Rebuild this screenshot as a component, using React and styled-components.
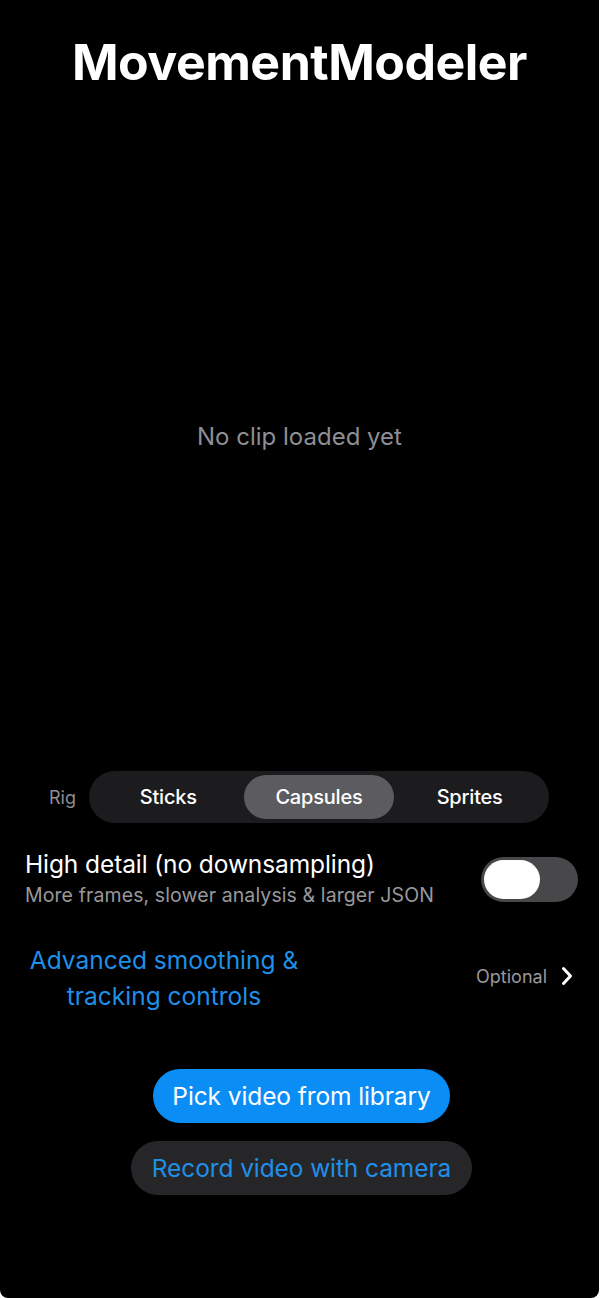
import React, { useState } from 'react'
import styled, { createGlobalStyle } from 'styled-components'

const GlobalStyle = createGlobalStyle`
  html, body {
    margin: 0;
    padding: 0;
    background: #ffffff;
  }
  * {
    box-sizing: border-box;
  }
`

const RIGS = ['Sticks', 'Capsules', 'Sprites']

function App() {
  const [rig, setRig] = useState('Capsules')
  const [highDetail, setHighDetail] = useState(false)

  return (
    <>
      <GlobalStyle />
      <Screen>
        <Title>MovementModeler</Title>
        <Preview>
          <EmptyText>No clip loaded yet</EmptyText>
        </Preview>

        <Controls>
          <RigRow>
            <RigLabel>Rig</RigLabel>
            <Segmented>
              {RIGS.map((name) => (
                <Segment
                  key={name}
                  type="button"
                  $active={rig === name}
                  onClick={() => setRig(name)}
                >
                  {name}
                </Segment>
              ))}
            </Segmented>
          </RigRow>

          <ToggleRow>
            <ToggleText>
              <ToggleTitle>High detail (no downsampling)</ToggleTitle>
              <ToggleSub>More frames, slower analysis &amp; larger JSON</ToggleSub>
            </ToggleText>
            <Switch
              type="button"
              $on={highDetail}
              onClick={() => setHighDetail(!highDetail)}
            >
              <Thumb $on={highDetail} />
            </Switch>
          </ToggleRow>

          <LinkRow>
            <LinkText>
              Advanced smoothing &amp;
              <br />
              tracking controls
            </LinkText>
            <Accessory>
              <OptionalText>Optional</OptionalText>
              <svg width="12" height="20" viewBox="0 0 12 20" fill="none">
                <path
                  d="M2.5 2.5 L9.5 10 L2.5 17.5"
                  stroke="#ffffff"
                  strokeWidth="3"
                  strokeLinecap="round"
                  strokeLinejoin="round"
                />
              </svg>
            </Accessory>
          </LinkRow>

          <Buttons>
            <PrimaryButton type="button">Pick video from library</PrimaryButton>
            <SecondaryButton type="button">Record video with camera</SecondaryButton>
          </Buttons>
        </Controls>
      </Screen>
    </>
  )
}

const Screen = styled.div`
  width: 599px;
  height: 1298px;
  background: #000000;
  border-bottom-left-radius: 8px;
  border-bottom-right-radius: 8px;
  display: flex;
  flex-direction: column;
  font-family: Inter, 'Noto Sans', 'Liberation Sans', sans-serif;
  overflow: hidden;
`

const Title = styled.h1`
  margin: 30px 0 0;
  text-align: center;
  color: #ffffff;
  font-size: 50px;
  font-weight: 700;
  line-height: 64px;
  letter-spacing: -0.5px;
`

const Preview = styled.div`
  flex: 1;
  display: flex;
  align-items: center;
  justify-content: center;
  padding-top: 8px;
`

const EmptyText = styled.span`
  color: #8e8e93;
  font-size: 24px;
  font-weight: 400;
`

const Controls = styled.div`
  display: flex;
  flex-direction: column;
  padding: 0 21px 103px 25px;
`

const RigRow = styled.div`
  display: flex;
  align-items: center;
  gap: 13px;
  padding-left: 24px;
  padding-right: 29px;
`

const RigLabel = styled.span`
  color: #8e8e93;
  font-size: 18px;
`

const Segmented = styled.div`
  flex: 1;
  display: grid;
  grid-template-columns: repeat(3, 1fr);
  height: 52px;
  padding: 4px;
  border-radius: 26px;
  background: #1c1c1e;
`

const Segment = styled.button`
  border: none;
  border-radius: 22px;
  background: ${(props) => (props.$active ? '#5b5b60' : 'transparent')};
  color: #ffffff;
  font-family: inherit;
  font-size: 20px;
  font-weight: 500;
  letter-spacing: -0.2px;
  cursor: pointer;
`

const ToggleRow = styled.div`
  display: flex;
  align-items: center;
  justify-content: space-between;
  margin-top: 25px;
`

const ToggleText = styled.div`
  display: flex;
  flex-direction: column;
  gap: 3px;
`

const ToggleTitle = styled.span`
  color: #ffffff;
  font-size: 24.5px;
  line-height: 32px;
  letter-spacing: -0.1px;
`

const ToggleSub = styled.span`
  color: #98989d;
  font-size: 19.5px;
  line-height: 24px;
  letter-spacing: 0.1px;
`

const Switch = styled.button`
  position: relative;
  width: 97px;
  height: 45px;
  border: none;
  border-radius: 23px;
  background: ${(props) => (props.$on ? '#0a8ef5' : '#48484a')};
  padding: 0;
  margin-top: 4px;
  cursor: pointer;
`

const Thumb = styled.span`
  position: absolute;
  top: 3px;
  left: ${(props) => (props.$on ? '38px' : '3px')};
  width: 56px;
  height: 39px;
  border-radius: 20px;
  background: #ffffff;
`

const LinkRow = styled.div`
  display: flex;
  align-items: center;
  justify-content: space-between;
  margin-top: 35px;
`

const LinkText = styled.span`
  width: 278px;
  color: #1f8fe8;
  font-size: 24.5px;
  line-height: 36px;
  text-align: center;
`

const Accessory = styled.div`
  display: flex;
  align-items: center;
  gap: 14px;
  padding-right: 5px;
  margin-top: -4px;
`

const OptionalText = styled.span`
  color: #98989d;
  font-size: 18px;
`

const Buttons = styled.div`
  display: flex;
  flex-direction: column;
  align-items: center;
  gap: 18px;
  margin-top: 55px;
`

const PrimaryButton = styled.button`
  height: 54px;
  padding: 0 19px;
  border: none;
  border-radius: 27px;
  background: #0a8ef5;
  color: #ffffff;
  font-family: inherit;
  font-size: 24.5px;
  letter-spacing: -0.1px;
  cursor: pointer;
`

const SecondaryButton = styled.button`
  height: 54px;
  padding: 0 21px;
  border: none;
  border-radius: 27px;
  background: #262628;
  color: #1f8fe8;
  font-family: inherit;
  font-size: 24.5px;
  letter-spacing: -0.1px;
  cursor: pointer;
`

export default App
